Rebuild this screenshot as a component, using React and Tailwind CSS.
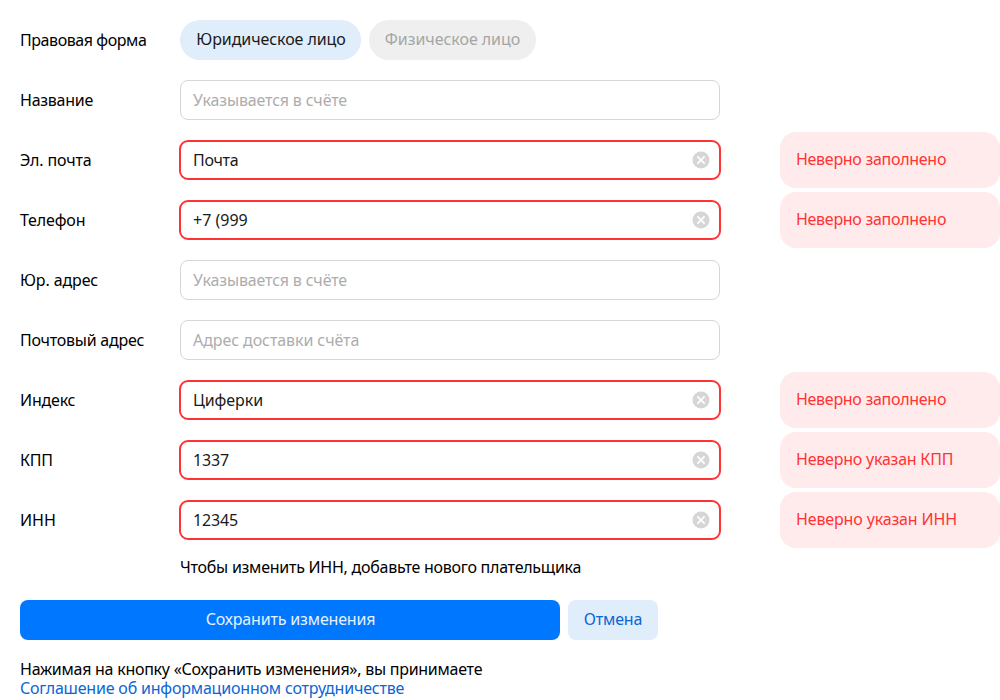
const rows = [
  { label: 'Название', ph: 'Указывается в счёте', track: 'tracking-[-0.25px]' },
  { label: 'Эл. почта', value: 'Почта', error: 'Неверно заполнено', track: 'tracking-[-0.15px]', valueTrack: 'tracking-[-0.3px]', errorTrack: 'tracking-[-0.29px]' },
  { label: 'Телефон', value: '+7 (999', error: 'Неверно заполнено', track: 'tracking-[-0.15px]', valueTrack: 'tracking-normal', errorTrack: 'tracking-[-0.29px]' },
  { label: 'Юр. адрес', ph: 'Указывается в счёте', track: 'tracking-[-0.12px]' },
  { label: 'Почтовый адрес', ph: 'Адрес доставки счёта', track: 'tracking-[-0.25px]', valueTrack: 'tracking-[-0.08px]' },
  { label: 'Индекс', value: 'Циферки', error: 'Неверно заполнено', track: 'tracking-[-0.2px]', valueTrack: 'tracking-[-0.08px]', errorTrack: 'tracking-[-0.29px]' },
  { label: 'КПП', value: '1337', error: 'Неверно указан КПП', track: 'tracking-[-0.3px]', valueTrack: 'tracking-[-0.15px]', errorTrack: 'tracking-[-0.22px]' },
  { label: 'ИНН', value: '12345', error: 'Неверно указан ИНН', track: 'tracking-normal', valueTrack: 'tracking-[-0.15px]', errorTrack: 'tracking-[-0.14px]' },
];

function ClearIcon() {
  return (
    <svg className="-mr-[3px] size-[18px]" viewBox="0 0 18 18" fill="none">
      <circle cx="9" cy="9" r="8.5" fill="#d6d6d6" />
      <path d="M5.4 5.4l7.2 7.2m0-7.2l-7.2 7.2" stroke="#fff" strokeWidth="1.8" />
    </svg>
  );
}

function Row({ label, ph, value, error, track, valueTrack = 'tracking-[-0.16px]', errorTrack }) {
  return (
    <div className="flex h-10 items-center">
      <span className={`w-40 shrink-0 ${track}`}>{label}</span>
      <div
        className={
          error
            ? 'mx-[-1px] flex h-10 w-[542px] shrink-0 items-center justify-between rounded-[9px] border-2 border-[#f33] px-3'
            : 'flex h-10 w-[540px] shrink-0 items-center rounded-lg border border-[#d6d6d6] px-3'
        }
      >
        <span className={`${valueTrack} ${error ? 'text-[#1a1a1a]' : 'text-[#adadad]'}`}>{value || ph}</span>
        {error && <ClearIcon />}
      </div>
      {error && (
        <div className={`ml-[60px] flex h-14 w-[220px] shrink-0 items-center rounded-2xl bg-[#ffebeb] px-4 pb-0.5 text-[#f33] ${errorTrack}`}>
          {error}
        </div>
      )}
    </div>
  );
}

export default function App() {
  return (
    <main className="h-[700px] w-[1000px] overflow-hidden bg-white pt-5 pl-5 font-['Noto_Sans',sans-serif] text-base text-black">
      <div className="flex h-10 items-center">
        <span className="w-40 tracking-[-0.43px]">Правовая форма</span>
        <button className="h-10 w-[181px] rounded-full bg-[#e0edfb] pb-0.5 pl-px tracking-[-0.08px] text-[#1a1a1a]">Юридическое лицо</button>
        <button className="ml-2 h-10 w-[167px] rounded-full bg-[#efefef] pb-0.5 tracking-[-0.06px] text-[#a6a6a6]">Физическое лицо</button>
      </div>
      <div className="mt-5 flex flex-col gap-5">
        {rows.map((r) => <Row key={r.label} {...r} />)}
      </div>
      <p className="mt-[15px] pl-40 tracking-[-0.255px]">Чтобы изменить ИНН, добавьте нового плательщика</p>
      <div className="mt-[21px] flex gap-2">
        <button className="h-10 w-[540px] rounded-lg bg-[#0077ff] pb-0.5 pl-px tracking-[-0.16px] text-[#e6f1ff]">Сохранить изменения</button>
        <button className="h-10 w-[90px] rounded-lg bg-[#e0edfb] pb-0.5 tracking-[-0.15px] text-[#0b66d6]">Отмена</button>
      </div>
      <p className="mt-5 leading-[19px]">
        <span className="tracking-[-0.26px]">Нажимая на кнопку «Сохранить изменения», вы принимаете</span>
        <br />
        <a className="tracking-[-0.19px] text-[#0b66d6]">Соглашение об информационном сотрудничестве</a>
      </p>
    </main>
  );
}
